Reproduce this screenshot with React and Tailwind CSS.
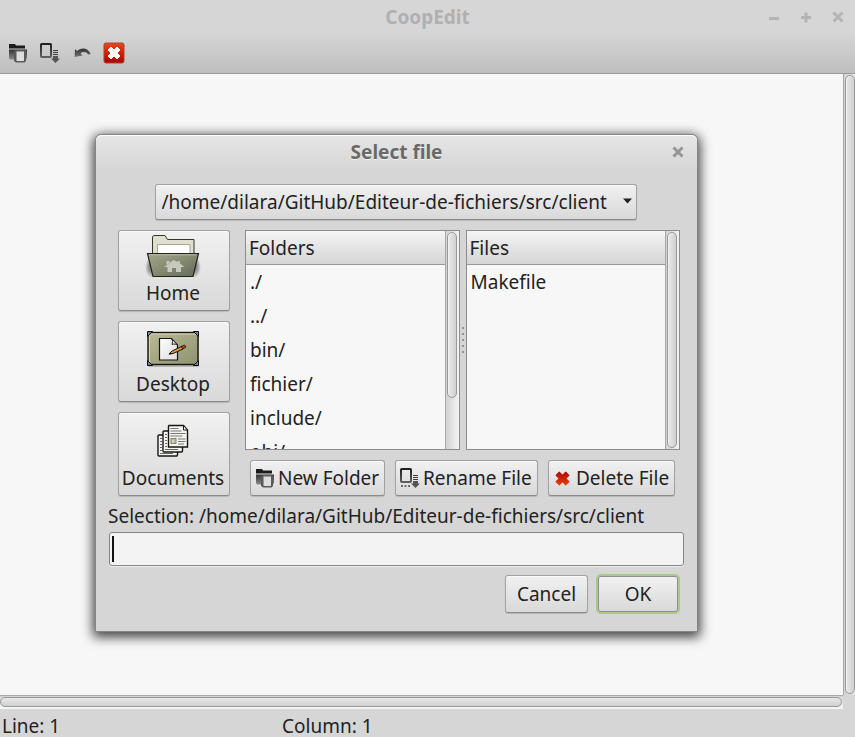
import React from "react";

const PATH = "/home/dilara/GitHub/Editeur-de-fichiers/src/client";

const BUTTON =
  "rounded-[3px] border border-[#a2a2a2] border-b-[#8a8a8a] bg-linear-to-b from-[#f1f1f1] to-[#d9d9d9] shadow-[inset_0_1px_0_#fafafa,0_1px_1px_rgba(0,0,0,0.15)]";

function FolderIcon() {
  return (
    <svg width="20" height="20" viewBox="0 0 20 20" aria-hidden="true">
      <defs>
        <linearGradient id="folderFill" x1="0" y1="0" x2="0" y2="1">
          <stop offset="0" stopColor="#333" />
          <stop offset="1" stopColor="#8a8a8a" />
        </linearGradient>
      </defs>
      <path d="M1 1h6l1 1.500h9V5.500H1z" fill="#1c1c1c" />
      <path d="M1 6.500h18V15l-1 1.500H2L1 15z" fill="url(#folderFill)" />
      <path d="M6 8.500 7.500 7h10.500V18L16.500 19.500H8L6 18z" fill="#5a5a5a" />
      <path d="M8.500 8.500h7.500v9l-.500.500H9l-.500-.500z" fill="#dedede" />
    </svg>
  );
}

function SaveIcon({ dots }) {
  return (
    <svg width="20" height="20" viewBox="0 0 20 20" aria-hidden="true">
      <defs>
        <linearGradient id="saveFrame" x1="0" y1="0" x2="0" y2="1">
          <stop offset="0" stopColor="#1f1f1f" />
          <stop offset="1" stopColor="#606060" />
        </linearGradient>
      </defs>
      <rect x="1" y="1" width="10" height="13" rx="0.800" fill="none" stroke="url(#saveFrame)" strokeWidth="2" />
      <path d="M13 7.500h5M13 9.500h5M13 11.500h5" stroke="#3f3f3f" />
      <path d="M13 13h5v2.500h2L15.500 20 11 15.500h2z" fill="#555" />
      {dots && <path d="M1 18h2M4.500 18h2M8 18h2" stroke="#444" strokeWidth="1.500" />}
    </svg>
  );
}

function UndoIcon() {
  return (
    <svg width="18" height="12" viewBox="0 0 18 12" aria-hidden="true">
      <defs>
        <linearGradient id="undoFill" x1="0" y1="0" x2="0" y2="1">
          <stop offset="0" stopColor="#303030" />
          <stop offset="1" stopColor="#747474" />
        </linearGradient>
      </defs>
      <path d="M1 2 3 4C7 .5 13.500.2 16.800 7L14 7.500C12 4.500 9 4.500 6.500 6.500L8.500 8.500.6 10z" fill="url(#undoFill)" />
    </svg>
  );
}

function CrossShape({ fill }) {
  return (
    <path
      d="M3 0 6 3 9 0l3 3-3 3 3 3-3 3-3-3-3 3-3-3 3-3-3-3z"
      fill={fill}
      stroke={fill}
      strokeLinejoin="round"
    />
  );
}

function CloseBadgeIcon() {
  return (
    <svg width="22" height="22" viewBox="0 0 22 22" aria-hidden="true">
      <defs>
        <linearGradient id="badgeFill" x1="0" y1="0" x2="0" y2="1">
          <stop offset="0" stopColor="#e8471f" />
          <stop offset="0.500" stopColor="#cf2105" />
          <stop offset="1" stopColor="#a80500" />
        </linearGradient>
      </defs>
      <rect x="1" y="1" width="20" height="20" rx="2" fill="url(#badgeFill)" stroke="#a3462f" />
      <g transform="translate(5 5)">
        <CrossShape fill="#fff" />
      </g>
    </svg>
  );
}

function DeleteIcon() {
  return (
    <svg width="15" height="15" viewBox="-1 -1 14 14" aria-hidden="true">
      <defs>
        <linearGradient id="deleteFill" x1="0" y1="0" x2="0" y2="12" gradientUnits="userSpaceOnUse">
          <stop offset="0" stopColor="#b00b00" />
          <stop offset="1" stopColor="#e83a10" />
        </linearGradient>
      </defs>
      <CrossShape fill="url(#deleteFill)" />
    </svg>
  );
}

function HomeIcon() {
  return (
    <svg width="60" height="44" viewBox="0 0 60 44" aria-hidden="true">
      <defs>
        <linearGradient id="homeFront" x1="0" y1="0" x2="1" y2="1">
          <stop offset="0" stopColor="#a2a78c" />
          <stop offset="0.500" stopColor="#858a70" />
          <stop offset="1" stopColor="#63685a" />
        </linearGradient>
        <radialGradient id="homeShadow">
          <stop offset="0.400" stopColor="#000" stopOpacity="0.400" />
          <stop offset="1" stopColor="#000" stopOpacity="0" />
        </radialGradient>
      </defs>
      <ellipse cx="9" cy="33" rx="7" ry="11" fill="url(#homeShadow)" />
      <ellipse cx="51" cy="33" rx="7" ry="11" fill="url(#homeShadow)" />
      <path d="M9.500 22V2.500l1.500-1h11l2.500 4H51V22z" fill="#dedfcd" stroke="#34352c" />
      <path d="M14.500 20V10.500H47V20z" fill="#fff" stroke="#a5a698" />
      <path d="M4.500 19.500h51L50 42.500H10z" fill="url(#homeFront)" stroke="#20221b" strokeWidth="1.200" />
      <path d="M6.500 20.800h47" stroke="#b8bca8" />
      <path d="M30.500 26 21 33h3.500v5H29v-4h4v4h5v-5h3.500L37 29.500V27h-2v1zM23.500 27h3v2.500l-3 2z" fill="#c6c9bb" />
    </svg>
  );
}

function DesktopIcon() {
  return (
    <svg width="56" height="40" viewBox="0 0 56 40" aria-hidden="true">
      <defs>
        <linearGradient id="deskFill" x1="0" y1="0" x2="1" y2="1">
          <stop offset="0" stopColor="#b9bb98" />
          <stop offset="0.500" stopColor="#a4a781" />
          <stop offset="1" stopColor="#8f9270" />
        </linearGradient>
        <linearGradient id="deskPage" x1="0" y1="0" x2="1" y2="1">
          <stop offset="0" stopColor="#fff" />
          <stop offset="1" stopColor="#dcdcdc" />
        </linearGradient>
      </defs>
      <rect x="3" y="4" width="51" height="34" rx="1" fill="#000" opacity="0.200" />
      <rect x="3" y="3.500" width="50" height="32" fill="url(#deskFill)" stroke="#14140e" strokeWidth="1.400" />
      <path d="M4.500 34V5H52" fill="none" stroke="#d2d4b8" />
      <g fill="#73809c" stroke="#111">
        <path d="M2.500 2.500h5L2.500 7.500zM53.500 2.500h-5l5 5zM2.500 36.500h5l-5-5zM53.500 36.500h-5l5-5z" />
      </g>
      <path d="M14.500 9.500h12l6 6.500v15h-18z" fill="url(#deskPage)" stroke="#151515" strokeWidth="1.200" />
      <path d="M26.500 9.500c1.500 2 1 4 .5 6 2-.8 4-.5 5.500.5z" fill="#f6f6f6" stroke="#222" />
      <path d="m24 25 3-3 9.500-4.500 1.500 2.500L28 24.500z" fill="#d99b3a" stroke="#201408" />
      <path d="m36 17.500 3.500-1.500 1.500 2-3 2z" fill="#c33c25" stroke="#201408" strokeWidth="0.800" />
      <path d="m23.500 25.500 2-2 1.200 1.500z" fill="#111" />
    </svg>
  );
}

function DocumentsIcon() {
  return (
    <svg width="32" height="34" viewBox="0 0 32 34" aria-hidden="true">
      <g fill="#f4f4f0" stroke="#161616" strokeWidth="1.400">
        <rect x="1" y="11" width="19.500" height="21" rx="1" />
        <rect x="6" y="7" width="19.500" height="21" rx="1" />
        <path d="M12 1.500h14.500l4 4.500v17H11.500V2z" />
      </g>
      <path d="M26.500 1.500V6h4z" fill="#fff" stroke="#161616" />
      <path d="M3 14.500h2M3 17.500h2M3 20.500h2M3 23.500h2M3 26.500h2M3 29.500h13M8 10.500h2M8 13.500h2M8 16.500h2M8 19.500h2M8 22.500h2M8 25.500h13" stroke="#666" />
      <path d="M13.500 4.500h8M13.500 7h11M13.500 9.500h15M13.500 12h12M21 15h7.500M21 17.500h7.500M21 20h6" stroke="#777" />
      <rect x="14" y="14.500" width="5" height="5" fill="#aebdc4" stroke="#85866b" />
      <path d="M15 19v-3h2v3z" fill="#e2d59a" />
    </svg>
  );
}

function WindowGlyph({ kind }) {
  return (
    <svg width="12" height="12" viewBox="0 0 12 12" fill="none" stroke="currentColor" strokeWidth="3" aria-hidden="true">
      {kind === "min" && <path d="M1 7.500h10" />}
      {kind === "max" && <path d="M1 6.500h10M6 1.500v10" />}
      {kind === "close" && <path d="m1.500 1.500 9 9m0-9-9 9" />}
    </svg>
  );
}

function Thumb({ className }) {
  return (
    <div
      className={`w-[10px] rounded-full border border-[#999] bg-linear-to-r from-[#e9e9e9] to-[#d0d0d0] shadow-[inset_1px_1px_0_#f0f0f0] ${className}`}
    />
  );
}

function FileList({ title, items, thumb }) {
  return (
    <div className="flex h-[220px] min-w-0 flex-1 border border-[#8c8c8c] bg-[#f7f7f7]">
      <div className="min-w-0 flex-1 overflow-hidden">
        <table className="w-full border-collapse text-left">
          <thead>
            <tr className="h-[34px] bg-linear-to-b from-[#f5f5f5] to-[#d4d4d4]">
              <th className="p-0 pl-[3px] font-normal shadow-[inset_0_-1px_0_#999]">{title}</th>
            </tr>
          </thead>
          <tbody>
            {items.map((item) => (
              <tr key={item} className="h-[34px]">
                <td className="p-0 pl-1">{item}</td>
              </tr>
            ))}
          </tbody>
        </table>
      </div>
      <div className="flex w-[14px] flex-col border-l border-[#a8a8a8] bg-linear-to-r from-[#d2d2d2] to-[#f4f4f4] py-px pl-px">
        <Thumb className={thumb} />
      </div>
    </div>
  );
}

function PlaceButton({ icon, label, className }) {
  return (
    <button className={`${BUTTON} flex flex-col items-center justify-end pr-[2px] pb-[3px] ${className}`}>
      {icon}
      <span className="leading-7">{label}</span>
    </button>
  );
}

function ActionButton({ icon, label, className }) {
  return (
    <button className={`${BUTTON} flex h-9 items-center whitespace-nowrap ${className}`}>
      {icon}
      {label}
    </button>
  );
}

function FileDialog() {
  return (
    <section
      role="dialog"
      aria-label="Select file"
      className="absolute top-[134px] left-[95px] w-[603px] rounded-t-md border border-[#858585] bg-[#d6d6d6] pb-[18px] shadow-[0_3px_12px_2px_rgba(0,0,0,0.75)]"
    >
      <header className="relative h-[49px] rounded-t-md bg-linear-to-b from-[#e6e6e6] to-[#d6d6d6] to-70% pt-[3px] text-center shadow-[inset_0_1px_0_#fff]">
        <h2 className="leading-7 font-bold text-[#696969] [text-shadow:0_1px_0_#f0f0f0]">Select file</h2>
        <button aria-label="Close" className="absolute top-[11px] right-[13px] block text-[#959595]">
          <WindowGlyph kind="close" />
        </button>
      </header>
      <div className="flex justify-center pr-[2px]">
        <div className="relative w-[482px]">
          <select aria-label="Folder" className={`${BUTTON} h-9 w-full appearance-none pr-6 pl-[6px]`}>
            <option>{PATH}</option>
          </select>
          <svg className="pointer-events-none absolute top-[14px] right-[5px]" width="9" height="6" viewBox="0 0 9 6" aria-hidden="true">
            <path d="M0 .5h9L4.500 5.500z" fill="#222" />
          </svg>
        </div>
      </div>
      <div className="mt-[10px] flex gap-[15px] pr-[17px] pl-[22px]">
        <nav className="flex w-28 shrink-0 flex-col gap-[10px]">
          <PlaceButton icon={<HomeIcon />} label="Home" className="h-[81px] gap-px" />
          <PlaceButton icon={<DesktopIcon />} label="Desktop" className="h-[81px] gap-px" />
          <PlaceButton icon={<DocumentsIcon />} label="Documents" className="h-[84px] gap-[6px]" />
        </nav>
        <div className="flex min-w-0 flex-1 flex-col gap-[10px]">
          <div className="flex">
            <FileList title="Folders" items={["./", "../", "bin/", "fichier/", "include/", "obj/"]} thumb="h-[166px]" />
            <div className="flex w-[6px] flex-col items-center justify-center gap-1">
              {[0, 1, 2, 3, 4].map((dot) => (
                <span key={dot} className="size-[2px] bg-[#929292]" />
              ))}
            </div>
            <FileList title="Files" items={["Makefile"]} thumb="flex-1" />
          </div>
          <div className="flex justify-center gap-[10px]">
            <ActionButton icon={<FolderIcon />} label="New Folder" className="w-[135px] gap-[3px] pl-1" />
            <ActionButton icon={<SaveIcon dots />} label="Rename File" className="w-[143px] gap-[3px] pl-1" />
            <ActionButton icon={<DeleteIcon />} label="Delete File" className="w-[127px] gap-[6px] pl-[6px]" />
          </div>
        </div>
      </div>
      <div className="mt-[6px] px-[13px]">
        <label htmlFor="selection" className="-ml-px block leading-7">
          Selection: {PATH}
        </label>
        <div className="relative mt-[2px]">
          <input
            id="selection"
            type="text"
            className="block h-[34px] w-full rounded-[3px] border border-[#858585] bg-[#f3f3f3] px-1 caret-transparent shadow-[0_1px_0_#ececec] outline-none"
          />
          <span className="absolute top-1 left-[3px] h-[26px] w-[2px] bg-[#111]" />
        </div>
      </div>
      <div className="mt-[9px] flex justify-end gap-[10px] pr-[19px]">
        <button className={`${BUTTON} h-[38px] w-[83px]`}>Cancel</button>
        <button className="h-[36px] w-[80px] self-center rounded-[3px] border border-[#8f8f8f] bg-linear-to-b from-[#f1f1f1] to-[#d9d9d9] shadow-[0_0_0_2px_#abc985]">
          OK
        </button>
      </div>
    </section>
  );
}

export default function App() {
  return (
    <div className="relative flex h-screen flex-col overflow-hidden bg-[#d6d6d6] font-['Noto_Sans',sans-serif] text-[19px] text-[#222]">
      <header className="h-[74px] shrink-0 border-b border-[#999] bg-linear-to-b from-[#d6d6d6] from-45% to-[#bebebe]">
        <div className="relative flex h-[34px] items-center justify-center">
          <h1 className="font-bold text-[#b0b0b0]">CoopEdit</h1>
          <div className="absolute right-[11px] flex gap-5 text-[#b4b4b4]">
            <button aria-label="Minimize"><WindowGlyph kind="min" /></button>
            <button aria-label="Maximize"><WindowGlyph kind="max" /></button>
            <button aria-label="Close window"><WindowGlyph kind="close" /></button>
          </div>
        </div>
        <div className="flex h-[38px] items-center gap-3 pl-2">
          <button aria-label="Open"><FolderIcon /></button>
          <button aria-label="Save"><SaveIcon /></button>
          <button aria-label="Undo" className="pl-[2px]"><UndoIcon /></button>
          <button aria-label="Quit" className="-ml-px"><CloseBadgeIcon /></button>
        </div>
      </header>
      <div className="flex min-h-0 flex-1">
        <textarea aria-label="Document" className="block flex-1 resize-none bg-[#f7f7f7] outline-none" />
        <div className="flex w-3 flex-col border-l border-[#a8a8a8] bg-linear-to-r from-[#d2d2d2] to-[#e4e4e4] py-px pl-px">
          <Thumb className="flex-1" />
        </div>
      </div>
      <div className="mr-3 h-[14px] shrink-0 border-t border-[#a8a8a8] bg-linear-to-b from-[#d2d2d2] to-[#f7f7f7] pt-px pr-px">
        <div className="h-[10px] rounded-full border border-[#999] bg-linear-to-b from-[#e9e9e9] to-[#d0d0d0]" />
      </div>
      <footer className="flex h-7 shrink-0 items-end pl-[2px] leading-[22px] whitespace-nowrap">
        <span className="w-[280px]">Line: 1</span>
        <span>Column: 1</span>
      </footer>
      <FileDialog />
    </div>
  );
}
